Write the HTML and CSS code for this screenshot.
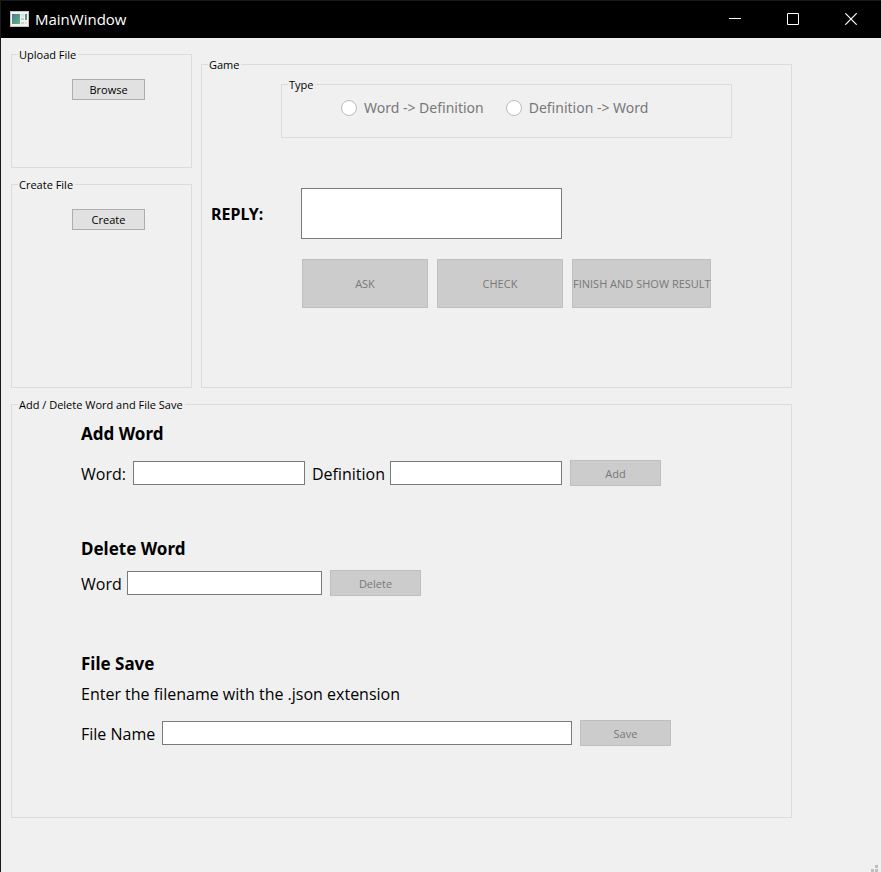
FILE: index.html
```
<!DOCTYPE html>
<html lang="en">
<head>
<meta charset="utf-8">
<title>MainWindow</title>
<link rel="stylesheet" href="styles.css">
</head>
<body>
<div class="window">
  <header class="titlebar">
    <svg class="app-icon" width="19" height="16" viewBox="0 0 19 16" aria-hidden="true">
      <defs>
        <linearGradient id="pane" x1="0" y1="0" x2="1" y2="1">
          <stop offset="0" stop-color="#4a78a0"/>
          <stop offset="1" stop-color="#5fb878"/>
        </linearGradient>
      </defs>
      <rect width="19" height="16" fill="#c4c4c4"/>
      <rect x="1" y="1" width="17" height="14" fill="#f2f2f2"/>
      <rect x="2" y="3" width="8" height="10" fill="url(#pane)"/>
      <rect x="11" y="3" width="3" height="3" fill="#dedede"/>
      <rect x="11" y="7" width="3" height="2" fill="#cacaca"/>
      <rect x="11" y="11" width="3" height="2" fill="#d0d0d0"/>
      <rect x="15" y="3" width="2" height="6" fill="url(#pane)"/>
      <rect x="15" y="11" width="2" height="2" fill="#dcdcdc"/>
    </svg>
    <h1 class="title">MainWindow</h1>
    <div class="window-buttons">
      <button type="button" class="window-button" aria-label="Minimize"><svg width="12" height="12" viewBox="0 0 12 12"><path d="M0 5.5h12" stroke="#fff"/></svg></button>
      <button type="button" class="window-button" aria-label="Maximize"><svg width="12" height="12" viewBox="0 0 12 12"><path d="M.5 .5h11v11h-11z" fill="none" stroke="#fff"/></svg></button>
      <button type="button" class="window-button" aria-label="Close"><svg width="12" height="12" viewBox="0 0 12 12"><path d="M.3 .3l11.4 11.4M11.7 .3L.3 11.7" fill="none" stroke="#fff" stroke-width="1.2"/></svg></button>
    </div>
  </header>

  <main class="client">
    <div class="top">
      <div class="files">
        <fieldset class="group upload">
          <legend>Upload File</legend>
          <button type="button" class="button small">Browse</button>
        </fieldset>
        <fieldset class="group create">
          <legend>Create File</legend>
          <button type="button" class="button small">Create</button>
        </fieldset>
      </div>

      <fieldset class="group game">
        <legend>Game</legend>
        <fieldset class="group type">
          <legend>Type</legend>
          <div class="radios">
            <label class="radio"><input type="radio" name="type" disabled>Word -&gt; Definition</label>
            <label class="radio"><input type="radio" name="type" disabled>Definition -&gt; Word</label>
          </div>
        </fieldset>
        <div class="reply">
          <label for="reply">REPLY:</label>
          <input id="reply" class="field" type="text">
        </div>
        <div class="actions">
          <button type="button" class="button" disabled>ASK</button>
          <button type="button" class="button" disabled>CHECK</button>
          <button type="button" class="button wide" disabled>FINISH AND SHOW RESULT</button>
        </div>
      </fieldset>
    </div>

    <fieldset class="group words">
      <legend>Add / Delete Word and File Save</legend>
      <section class="section">
        <h2>Add Word</h2>
        <div class="row">
          <label class="label-word" for="word">Word:</label>
          <input id="word" class="field" type="text">
          <label class="label-definition" for="definition">Definition</label>
          <input id="definition" class="field" type="text">
          <button type="button" class="button" disabled>Add</button>
        </div>
      </section>
      <section class="section compact">
        <h2>Delete Word</h2>
        <div class="row">
          <label class="label-delete" for="delete-word">Word</label>
          <input id="delete-word" class="field medium" type="text">
          <button type="button" class="button" disabled>Delete</button>
        </div>
      </section>
      <section class="section">
        <h2>File Save</h2>
        <p class="hint">Enter the filename with the .json extension</p>
        <div class="row">
          <label class="label-file" for="file-name">File Name</label>
          <input id="file-name" class="field long" type="text">
          <button type="button" class="button" disabled>Save</button>
        </div>
      </section>
    </fieldset>
  </main>
  <svg class="grip" width="8" height="8" viewBox="0 0 8 8" aria-hidden="true"><path d="M4 1h3v3h-3zM0 5h3v3h-3zM4 5h3v3h-3z" fill="#bfbfbf"/></svg>
</div>
</body>
</html>
```
FILE: styles.css
```
* {
  box-sizing: border-box;
}

body {
  margin: 0;
  background: #f0f0f0;
  color: #000;
  font: 11px/13px "Open Sans", "Noto Sans", sans-serif;
}

button,
input {
  font: inherit;
  margin: 0;
}

.window {
  display: flex;
  flex-direction: column;
  min-height: 100vh;
  border-left: 1px solid #1a1a1a;
}

.titlebar {
  display: flex;
  align-items: center;
  height: 38px;
  padding: 0 1px 2px 9px;
  border-top: 1px solid #1a1a1a;
  background: #000;
  color: #fff;
}

.title {
  margin: 0 auto 0 6px;
  font-size: 15px;
  line-height: 20px;
  font-weight: 400;
}

.window-buttons {
  display: flex;
}

.window-button {
  display: grid;
  place-items: center;
  width: 58px;
  height: 36px;
  padding: 0;
  border: 0;
  background: none;
}

.client {
  flex: 1;
  display: flex;
  flex-direction: column;
  gap: 10px;
  padding: 10px 89px 0 10px;
}

.top {
  display: grid;
  grid-template-columns: 181px 1fr;
  gap: 9px;
}

.files {
  display: flex;
  flex-direction: column;
  gap: 10px;
}

.group {
  min-width: 0;
  margin: 0;
  padding: 0;
  border: 1px solid #dcdcdc;
}

.group > legend {
  margin-left: 6px;
  padding: 0 2px 0 1px;
}

.upload,
.create {
  padding: 18px 0 67px;
}

.upload .button,
.create .button {
  margin-left: 60px;
}

.create {
  flex: 1;
}

.game {
  margin-top: 10px;
  padding: 7px 0 79px;
}

.type {
  margin: 0 59px 0 79px;
}

.radios {
  display: flex;
  gap: 22px;
  padding: 7px 0 19px 59px;
}

.radio {
  display: flex;
  align-items: center;
  gap: 7px;
  color: #787878;
  font: 14px/20px "Noto Sans", sans-serif;
  white-space: nowrap;
}

.radio input {
  appearance: none;
  width: 16px;
  height: 16px;
  border: 1px solid #bcbcbc;
  border-radius: 50%;
  background: #fff;
}

.reply {
  display: flex;
  align-items: center;
  margin-top: 50px;
  padding-left: 9px;
}

.reply label {
  width: 90px;
  font: 700 16px/20px "Noto Sans", sans-serif;
}

.reply .field {
  width: 261px;
  height: 51px;
}

.actions {
  display: flex;
  gap: 9px;
  margin-top: 20px;
  padding-left: 100px;
}

.actions .button {
  width: 126px;
  height: 49px;
}

.actions .wide {
  width: 139px;
}

.button {
  width: 91px;
  height: 26px;
  padding: 0;
  border: 1px solid #adadad;
  background: #e1e1e1;
  color: #000;
  white-space: nowrap;
}

.button.small {
  width: 73px;
  height: 21px;
}

.button:disabled {
  border-color: #bfbfbf;
  background: #ccc;
  color: #787878;
}

.field {
  width: 172px;
  height: 24px;
  padding: 0 4px;
  border: 1px solid #7a7a7a;
  background: #fff;
}

.field.medium {
  width: 195px;
}

.field.long {
  width: 410px;
}

.words {
  padding: 13px 0 71px;
}

.section {
  display: flex;
  flex-direction: column;
  gap: 16px;
  padding-left: 69px;
}

.section + .section {
  margin-top: 58px;
}

.section + .compact {
  gap: 11px;
  margin-top: 53px;
}

.section h2 {
  margin: 0;
  font: 700 17px/20px "Noto Sans", sans-serif;
}

.section .hint {
  margin: -6px 0 0;
  font-size: 16px;
  line-height: 20px;
}

.row {
  display: flex;
  align-items: center;
  gap: 7px;
}

.row label {
  padding-top: 2px;
  font-size: 16px;
  line-height: 20px;
  white-space: nowrap;
}

.row .button {
  margin-left: 1px;
}

.label-word {
  width: 45px;
}

.label-delete {
  width: 39px;
}

.label-definition {
  width: 71px;
}

.label-file {
  width: 74px;
}

.grip {
  align-self: flex-end;
  margin-right: 2px;
}
```
